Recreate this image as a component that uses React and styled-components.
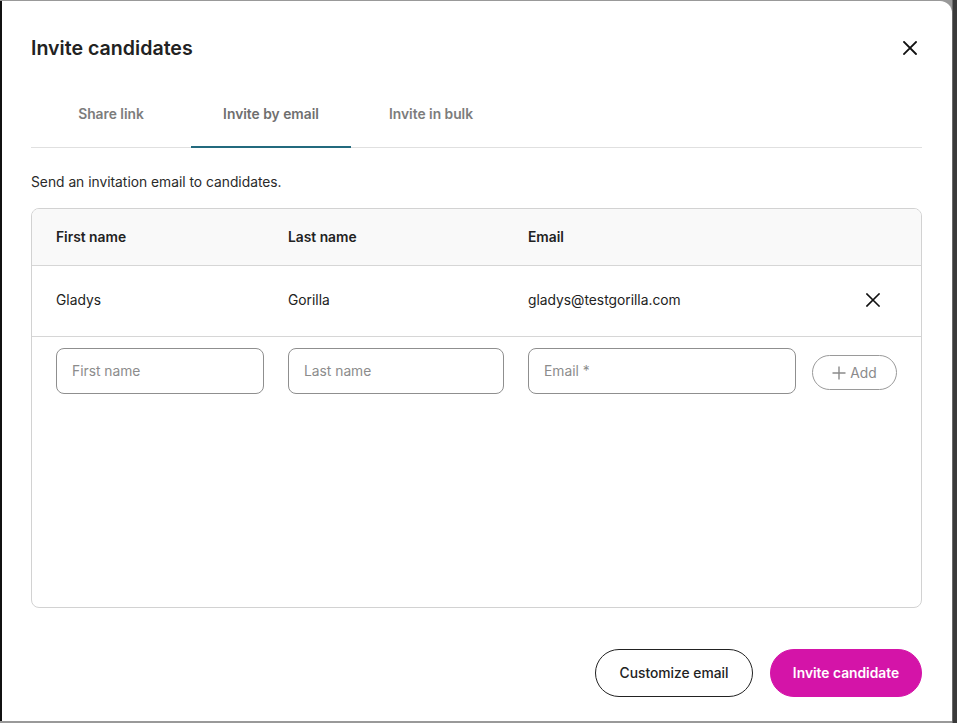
import React from "react";
import styled, { createGlobalStyle } from "styled-components";

const Global = createGlobalStyle`
  html, body { margin: 0; padding: 0; }
  body {
    background: #808080;
    font-family: Inter, "Liberation Sans", Arial, sans-serif;
    color: #222;
    -webkit-font-smoothing: antialiased;
  }
  * { box-sizing: border-box; }
`;

const Backdrop = styled.div`
  width: 957px;
  height: 723px;
  padding: 1px 5px 2px 0;
  background: linear-gradient(to right, #999 0, #999 952px, #3a3a3a 953px, #3a3a3a 957px);
`;

const Modal = styled.div`
  height: 100%;
  background: #fff;
  border-left: 2px solid #111;
  border-top-right-radius: 12px;
  padding: 0 30px 24px 29px;
  display: flex;
  flex-direction: column;
`;

const Header = styled.div`
  display: flex;
  align-items: center;
  justify-content: space-between;
  height: 94px;
`;

const Title = styled.h1`
  margin: 0;
  font-size: 19.6px;
  font-weight: 600;
  color: #222;
`;

const IconButton = styled.button`
  border: none;
  background: none;
  padding: 0;
  width: 22px;
  height: 22px;
  display: flex;
  align-items: center;
  justify-content: center;
  flex-shrink: 0;
  cursor: pointer;
  color: #111;
  margin-right: ${(p) => p.$mr || 0}px;
`;

const Tabs = styled.div`
  display: flex;
  border-bottom: 1px solid #e0e0e0;
`;

const Tab = styled.div`
  width: 160px;
  height: 53px;
  padding-bottom: 13px;
  display: flex;
  align-items: center;
  justify-content: center;
  font-size: 13.8px;
  font-weight: 600;
  color: ${(p) => (p.$active ? "#6f6f6f" : "#7c7c7c")};
  border-bottom: 2px solid ${(p) => (p.$active ? "#236a7e" : "transparent")};
  margin-bottom: -1px;
`;

const Intro = styled.p`
  margin: 26px 0 18px;
  font-size: 13.8px;
  line-height: 16px;
  color: #2a2a2a;
`;

const Table = styled.div`
  border: 1px solid #d2d2d2;
  border-radius: 8px;
  height: 400px;
  overflow: hidden;
`;

const Row = styled.div`
  display: grid;
  grid-template-columns: 208px 216px 268px minmax(0, 1fr);
  column-gap: 24px;
  align-items: center;
  padding: 0 24px ${(p) => p.$pb || 0}px;
  height: ${(p) => p.$h}px;
  background: ${(p) => p.$bg || "#fff"};
  border-bottom: ${(p) => (p.$border ? "1px solid #d6d6d6" : "none")};
`;

const HeadCell = styled.div`
  font-size: 13.8px;
  font-weight: 600;
  color: #222;
`;

const Cell = styled.div`
  font-size: 13.8px;
  color: #222;
`;

const RowEnd = styled.div`
  min-width: 0;
  display: flex;
  justify-content: flex-end;
`;

const Input = styled.input`
  width: 100%;
  height: 46px;
  border: 1px solid #8f8f8f;
  border-radius: 8px;
  padding: 0 15px;
  font-family: inherit;
  font-size: 13.8px;
  color: #222;
  outline: none;
  &::placeholder { color: #8c8c8c; }
`;

const AddButton = styled.button`
  flex-shrink: 0;
  width: 85px;
  height: 35px;
  margin-top: 7px;
  border: 1px solid #9a9a9a;
  border-radius: 999px;
  background: #fff;
  color: #8a8a8a;
  font-family: inherit;
  font-size: 13.8px;
  display: flex;
  align-items: center;
  justify-content: center;
  gap: 4px;
  padding: 0;
`;

const InputRow = styled(Row)`
  align-items: start;
  padding-top: 11px;
`;

const Footer = styled.div`
  margin-top: 41px;
  display: flex;
  justify-content: flex-end;
  gap: 17px;
`;

const Pill = styled.button`
  height: 48px;
  padding: 0;
  width: ${(p) => p.$w}px;
  flex-shrink: 0;
  border-radius: 999px;
  font-family: inherit;
  font-size: 13.8px;
  font-weight: ${(p) => (p.$primary ? 600 : 500)};
  color: ${(p) => (p.$primary ? "#fff" : "#222")};
  background: ${(p) => (p.$primary ? "#d414a8" : "#fff")};
  border: 1px solid ${(p) => (p.$primary ? "#d414a8" : "#222")};
`;

const XIcon = ({ size = 14, w = 1.8 }) => (
  <svg width={size} height={size} viewBox="0 0 14 14" fill="none">
    <path d="M1 1L13 13M13 1L1 13" stroke="currentColor" strokeWidth={w} strokeLinecap="square" />
  </svg>
);

const PlusIcon = () => (
  <svg width="14" height="14" viewBox="0 0 14 14" fill="none">
    <path d="M7 0.5V13.5M0.5 7H13.5" stroke="#8a8a8a" strokeWidth="1.4" />
  </svg>
);

export default function App() {
  return (
    <>
      <Global />
      <Backdrop>
        <Modal>
          <Header>
            <Title>Invite candidates</Title>
            <IconButton $mr={1} aria-label="Close">
              <XIcon />
            </IconButton>
          </Header>
          <Tabs>
            <Tab>Share link</Tab>
            <Tab $active>Invite by email</Tab>
            <Tab>Invite in bulk</Tab>
          </Tabs>
          <Intro>Send an invitation email to candidates.</Intro>
          <Table>
            <Row $h={57} $pb={1} $bg="#f9f9f9" $border>
              <HeadCell>First name</HeadCell>
              <HeadCell>Last name</HeadCell>
              <HeadCell>Email</HeadCell>
              <div />
            </Row>
            <Row $h={71} $pb={3} $border>
              <Cell>Gladys</Cell>
              <Cell>Gorilla</Cell>
              <Cell>gladys@testgorilla.com</Cell>
              <RowEnd>
                <IconButton $mr={13} aria-label="Remove">
                  <XIcon size={14} w={1.6} />
                </IconButton>
              </RowEnd>
            </Row>
            <InputRow $h={120}>
              <Input placeholder="First name" />
              <Input placeholder="Last name" />
              <Input placeholder="Email *" />
              <RowEnd>
                <AddButton>
                  <PlusIcon />
                  Add
                </AddButton>
              </RowEnd>
            </InputRow>
          </Table>
          <Footer>
            <Pill $w={158}>Customize email</Pill>
            <Pill $w={152} $primary>Invite candidate</Pill>
          </Footer>
        </Modal>
      </Backdrop>
    </>
  );
}
